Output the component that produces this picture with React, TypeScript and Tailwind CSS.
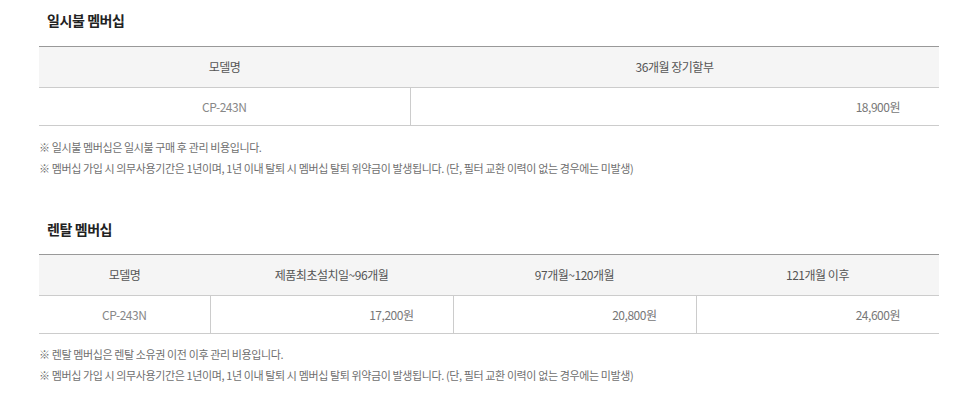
import React from 'react';

const font = { fontFamily: '"Noto Sans CJK KR", "Noto Sans", sans-serif' };

const notes = (first: string) => [
  first,
  '※ 멤버십 가입 시 의무사용기간은 1년이며, 1년 이내 탈퇴 시 멤버십 탈퇴 위약금이 발생됩니다. (단, 필터 교환 이력이 없는 경우에는 미발생)',
];

function Notes({ items }: { items: string[] }) {
  return (
    <ul className="text-[11px] leading-[21px] tracking-[-0.035em] text-[#6f6f6f]">
      {items.map((t, i) => (
        <li key={i}>{t}</li>
      ))}
    </ul>
  );
}

function Title({ children }: { children: React.ReactNode }) {
  return (
    <h3 className="pl-[8px] text-[14px] leading-[20px] font-bold tracking-[-0.03em] text-[#222]">
      {children}
    </h3>
  );
}

export default function App() {
  return (
    <div style={font} className="bg-white w-[980px] h-[397px] pl-[39px] pt-[10px]">
      <div className="w-[900px]">
        {/* 일시불 */}
        <Title>일시불 멤버십</Title>
        <table className="mt-[16px] w-full table-fixed border-collapse border-t border-[#999] text-[12px] tracking-[-0.04em]">
          <colgroup>
            <col className="w-[371px]" />
            <col />
          </colgroup>
          <thead>
            <tr className="h-[41px] bg-[#f5f5f5] border-b border-[#ccc]">
              <th className="font-normal text-[#555]">모델명</th>
              <th className="font-normal text-[#555]">36개월 장기할부</th>
            </tr>
          </thead>
          <tbody>
            <tr className="h-[38px] border-b border-[#ccc]">
              <td className="text-center text-[#888]">CP-243N</td>
              <td className="border-l border-[#ccc] text-right pr-[39px] text-[#777]">18,900원</td>
            </tr>
          </tbody>
        </table>
        <div className="mt-[11px]">
          <Notes items={notes('※ 일시불 멤버십은 일시불 구매 후 관리 비용입니다.')} />
        </div>

        {/* 렌탈 */}
        <div className="mt-[40px]">
          <Title>렌탈 멤버십</Title>
        </div>
        <table className="mt-[15px] w-full table-fixed border-collapse border-t border-[#999] text-[12px] tracking-[-0.04em]">
          <colgroup>
            <col className="w-[171px]" />
            <col />
            <col />
            <col />
          </colgroup>
          <thead>
            <tr className="h-[41px] bg-[#f5f5f5] border-b border-[#ccc]">
              <th className="font-normal text-[#555]">모델명</th>
              <th className="font-normal text-[#555]">제품최초설치일~96개월</th>
              <th className="font-normal text-[#555]">97개월~120개월</th>
              <th className="font-normal text-[#555]">121개월 이후</th>
            </tr>
          </thead>
          <tbody>
            <tr className="h-[38px] border-b border-[#ccc]">
              <td className="text-center text-[#888]">CP-243N</td>
              <td className="border-l border-[#ccc] text-right pr-[39px] text-[#777]">17,200원</td>
              <td className="border-l border-[#ccc] text-right pr-[39px] text-[#777]">20,800원</td>
              <td className="border-l border-[#ccc] text-right pr-[39px] text-[#777]">24,600원</td>
            </tr>
          </tbody>
        </table>
        <div className="mt-[10px]">
          <Notes items={notes('※ 렌탈 멤버십은 렌탈 소유권 이전 이후 관리 비용입니다.')} />
        </div>
      </div>
    </div>
  );
}
